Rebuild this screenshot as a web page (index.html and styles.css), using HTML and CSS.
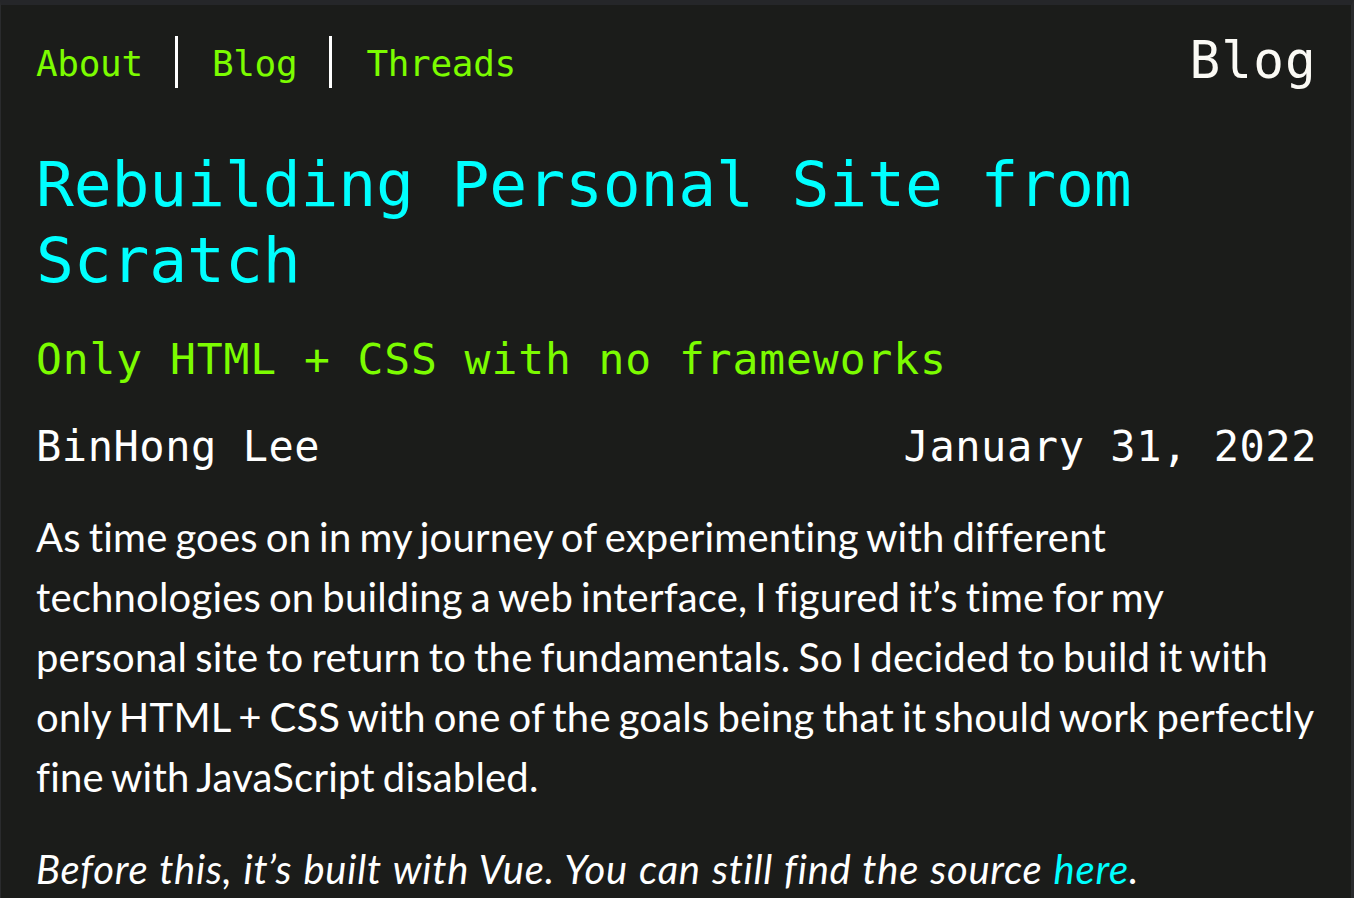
FILE: index.html
```html
<!DOCTYPE html>
<html lang="en">
<head>
<meta charset="utf-8">
<title>Rebuilding Personal Site from Scratch</title>
<link rel="stylesheet" href="styles.css">
</head>
<body>
<div class="page">
  <header class="site-header">
    <nav class="site-nav">
      <a class="nav-link" href="#">About</a>
      <a class="nav-link sep" href="#">Blog</a>
      <a class="nav-link sep" href="#">Threads</a>
    </nav>
    <div class="section-name">Blog</div>
  </header>
  <article class="post">
    <h1 class="post-title">Rebuilding Personal Site from Scratch</h1>
    <h2 class="post-subtitle">Only HTML + CSS with no frameworks</h2>
    <div class="post-meta">
      <span class="author">BinHong Lee</span>
      <span class="date">January 31, 2022</span>
    </div>
    <p class="post-text">As time goes on in my journey of experimenting with different technologies on building a web interface, I figured it’s time for my personal site to return to the fundamentals. So I decided to build it with only HTML + CSS with one of the goals being that it should work perfectly fine with JavaScript disabled.</p>
    <p class="post-text note">Before this, it’s built with Vue. You can still find the source <a class="inline-link" href="#">here</a>.</p>
  </article>
</div>
</body>
</html>
```
FILE: styles.css
```css
html, body {
  margin: 0;
  padding: 0;
  background: #1b1c1a;
}
body {
  border-top: 5px solid #252629;
  border-left: 1px solid #2a2b2d;
  border-right: 3px solid #2a2b2d;
  min-height: 893px;
  box-sizing: border-box;
  overflow: hidden;
}
.page {
  padding: 26px 34px 0 35px;
}
.site-header {
  display: flex;
  justify-content: space-between;
  align-items: flex-start;
}
.site-nav {
  display: flex;
  margin-top: 5px;
}
.nav-link {
  font-family: "DejaVu Sans Mono", monospace;
  font-size: 36px;
  line-height: 56px;
  height: 52px;
  color: #7cfc00;
  text-decoration: none;
  letter-spacing: -0.3px;
}
.nav-link.sep {
  border-left: 3px solid #ffffff;
  margin-left: 32px;
  padding-left: 34px;
}
.section-name {
  font-family: "DejaVu Sans Mono", monospace;
  font-size: 51px;
  line-height: 60px;
  color: #fbfaf5;
  letter-spacing: 1.2px;
}
.post-title {
  margin: 56px 0 0;
  font-family: "DejaVu Sans Mono", monospace;
  font-weight: normal;
  font-size: 63px;
  line-height: 75.5px;
  color: #00ffff;
  letter-spacing: -0.15px;
}
.post-subtitle {
  margin: 35px 0 0;
  font-family: "DejaVu Sans Mono", monospace;
  font-weight: normal;
  font-size: 43px;
  line-height: 52px;
  color: #7cfc00;
  letter-spacing: 0.9px;
}
.post-meta {
  margin-top: 37px;
  display: flex;
  justify-content: space-between;
  font-family: "DejaVu Sans Mono", monospace;
  font-size: 42px;
  line-height: 50px;
  color: #ffffff;
  letter-spacing: 0.55px;
}
.post-text {
  margin: 35px -5px 0 0;
  font-family: Lato, "Liberation Sans", sans-serif;
  font-size: 40px;
  line-height: 60px;
  color: #ffffff;
  letter-spacing: 0.2px;
  word-spacing: -2.5px;
}
.note {
  margin-top: 32px;
  font-style: italic;
  letter-spacing: 0.75px;
  word-spacing: 1px;
}
.inline-link {
  color: #00ffff;
  text-decoration: none;
}
```
